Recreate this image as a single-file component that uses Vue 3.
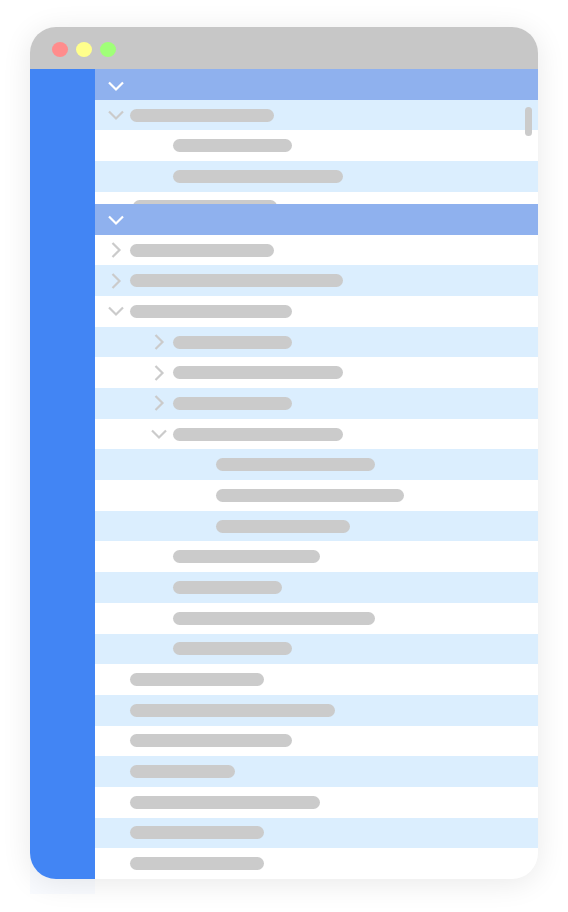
<script setup>
const pinned = [
  { level: 0, width: 144, icon: 'down' },
  { level: 1, width: 119 },
  { level: 1, width: 170 },
  { level: 0, width: 144, nudged: true },
]

const rows = [
  { level: 0, width: 144, icon: 'right' },
  { level: 0, width: 213, icon: 'right' },
  { level: 0, width: 162, icon: 'down' },
  { level: 1, width: 119, icon: 'right' },
  { level: 1, width: 170, icon: 'right' },
  { level: 1, width: 119, icon: 'right' },
  { level: 1, width: 170, icon: 'down' },
  { level: 2, width: 159 },
  { level: 2, width: 188 },
  { level: 2, width: 134 },
  { level: 1, width: 147 },
  { level: 1, width: 109 },
  { level: 1, width: 202 },
  { level: 1, width: 119 },
  { level: 0, width: 134 },
  { level: 0, width: 205 },
  { level: 0, width: 162 },
  { level: 0, width: 105 },
  { level: 0, width: 190 },
  { level: 0, width: 134 },
  { level: 0, width: 134 },
]

const paths = {
  down: 'M1 4.5 L8 11.5 L15 4.5',
  right: 'M4.5 1 L11.5 8 L4.5 15',
}
const labels = { down: 'Collapse', right: 'Expand' }
</script>

<template>
  <main class="page">
    <div class="window">
      <header class="titlebar">
        <button class="dot red" aria-label="Close"></button>
        <button class="dot yellow" aria-label="Minimize"></button>
        <button class="dot green" aria-label="Zoom"></button>
      </header>
      <div class="body">
        <nav class="sidebar"></nav>
        <div class="content">
          <section class="panel pinned">
            <div class="row heading">
              <button class="toggle" aria-label="Collapse section">
                <svg viewBox="0 0 16 16"><path :d="paths.down" /></svg>
              </button>
            </div>
            <div
              v-for="(row, i) in pinned"
              :key="i"
              class="row"
              :class="['level-' + row.level, { tinted: i % 2 === 0, nudged: row.nudged }]"
            >
              <button v-if="row.icon" class="toggle" :aria-label="labels[row.icon]">
                <svg viewBox="0 0 16 16"><path :d="paths[row.icon]" /></svg>
              </button>
              <span v-else class="toggle"></span>
              <span class="bar" :style="{ width: row.width + 'px' }"></span>
            </div>
            <span class="thumb"></span>
          </section>
          <section class="panel tree">
            <div class="row heading">
              <button class="toggle" aria-label="Collapse section">
                <svg viewBox="0 0 16 16"><path :d="paths.down" /></svg>
              </button>
            </div>
            <div
              v-for="(row, i) in rows"
              :key="i"
              class="row"
              :class="['level-' + row.level, { tinted: i % 2 === 1 }]"
            >
              <button v-if="row.icon" class="toggle" :aria-label="labels[row.icon]">
                <svg viewBox="0 0 16 16"><path :d="paths[row.icon]" /></svg>
              </button>
              <span v-else class="toggle"></span>
              <span class="bar" :style="{ width: row.width + 'px' }"></span>
            </div>
          </section>
        </div>
      </div>
    </div>
  </main>
</template>

<style>
body {
  margin: 0;
  background: #fff;
}
</style>

<style scoped>
.page {
  position: relative;
  z-index: 0;
  box-sizing: border-box;
  min-height: 100vh;
  padding: 27px 30px 33px;
  display: flex;
  font-family: "Liberation Sans", sans-serif;
}
/* faint blue cast under the sidebar */
.page::after {
  content: "";
  position: absolute;
  z-index: -1;
  left: 30px;
  bottom: 18px;
  width: 65px;
  height: 44px;
  background: rgba(66, 133, 244, 0.03);
}
.window {
  flex: 1;
  display: flex;
  flex-direction: column;
  overflow: hidden;
  border-radius: 26px;
  background: #fff;
  box-shadow: 0 4px 30px rgba(0, 0, 0, 0.09);
}
.titlebar {
  display: flex;
  align-items: center;
  gap: 8px;
  height: 42px;
  padding: 2px 22px 0;
  box-sizing: border-box;
  background: #c7c7c7;
}
.dot {
  width: 16px;
  height: 15px;
  padding: 0;
  border: 0;
  border-radius: 50%;
}
.red {
  background: #ff8c8c;
}
.yellow {
  background: #ffff8c;
}
.green {
  background: #a0ff78;
}
.body {
  flex: 1;
  display: flex;
}
.sidebar {
  width: 65px;
  background: #4285f4;
}
.content {
  flex: 1;
  display: flex;
  flex-direction: column;
}
.panel {
  display: grid;
}
.pinned {
  position: relative;
  height: 135px;
  overflow: hidden;
  grid-template-rows: 31px 30px 31px 31px 29px;
}
.tree {
  flex: 1;
  grid-auto-rows: 1fr;
}
.row {
  display: flex;
  align-items: center;
  gap: 6px;
  box-sizing: border-box;
  padding-left: 13px;
  color: #cbcbcb;
}
.level-1 {
  padding-left: 56px;
}
.level-2 {
  padding-left: 99px;
}
.nudged {
  padding-left: 16px;
}
.tinted {
  background: #dbeefe;
}
.heading {
  padding-top: 2px;
  background: #8fb1ee;
  color: #fff;
}
.toggle {
  flex: none;
  width: 16px;
  height: 16px;
  padding: 0;
  border: 0;
  background: none;
  color: inherit;
}
.toggle svg {
  display: block;
  width: 16px;
  height: 16px;
  overflow: visible;
  fill: none;
  stroke: currentColor;
  stroke-width: 2.2;
}
.bar {
  height: 13px;
  border-radius: 7px;
  background: #cbcbcb;
}
.thumb {
  position: absolute;
  top: 38px;
  right: 6px;
  width: 7px;
  height: 29px;
  border-radius: 4px;
  background: #cbcbcb;
}
</style>
